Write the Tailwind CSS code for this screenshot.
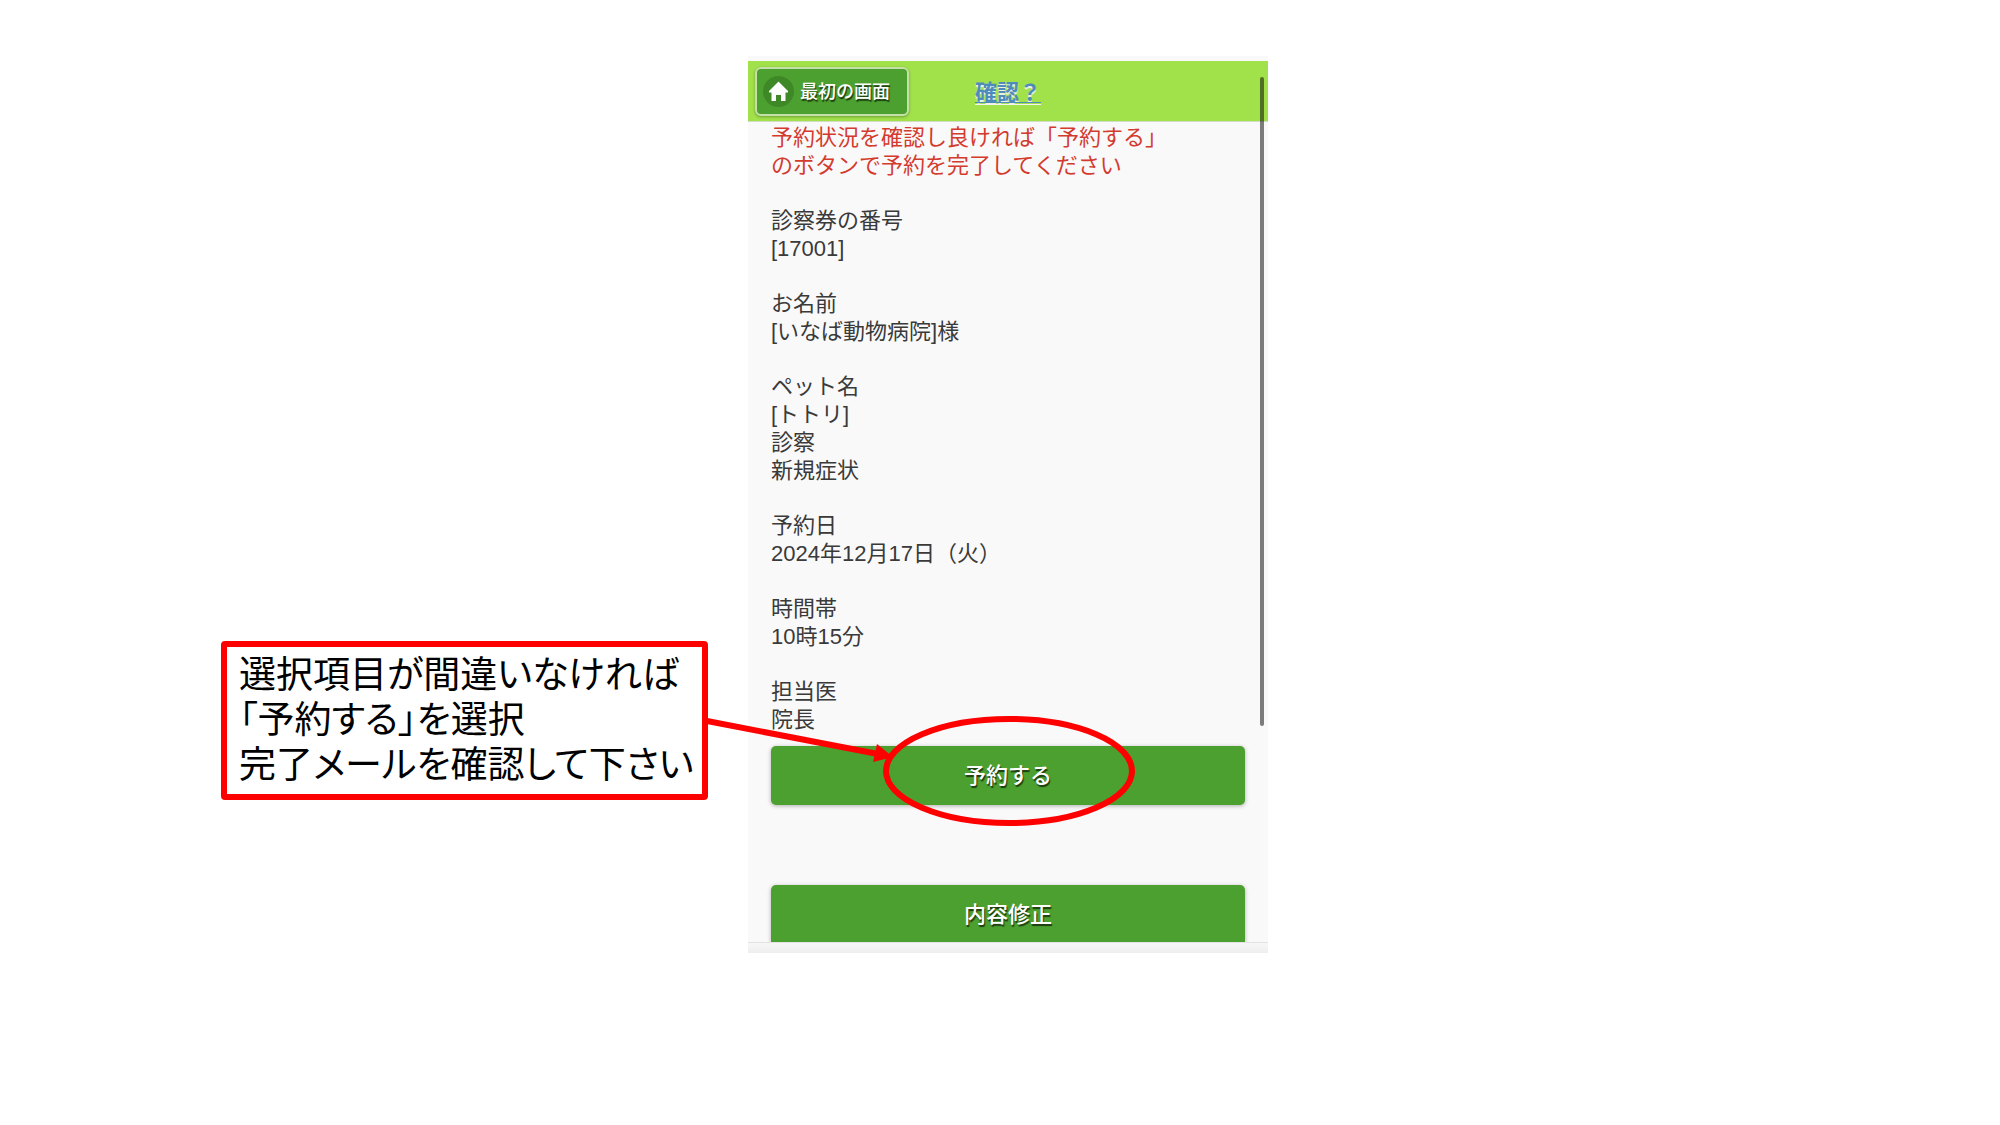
<!DOCTYPE html>
<html lang="ja">
<head>
    <meta charset="UTF-8">
    <meta name="viewport" content="width=device-width, initial-scale=1.0">
    <title>予約の確認</title>
    <script src="https://cdn.jsdelivr.net/npm/@tailwindcss/browser@4"></script>
</head>
<body class="bg-white min-h-screen font-['Liberation_Sans','Noto_Sans_CJK_JP',sans-serif]">
    <main class="grid grid-cols-[221fr_487fr_40fr_520fr_732fr] items-start pt-14">

        <!-- Callout -->
        <aside class="col-start-2 mt-[585px] rounded-sm border-6 border-[#ff0000] bg-white pt-[3px] pb-[9px] pl-3">
            <p class="text-[37px] leading-[45px] text-black whitespace-nowrap font-['Noto_Sans_CJK_JP',sans-serif] [font-feature-settings:'palt']">
                選択項目が間違いなければ<br>
                「予約する」を選択<br>
                完了メールを確認して下さい
            </p>
        </aside>

        <!-- Phone screen -->
        <section class="relative col-start-4 bg-[#f9f9f9] pt-[5px]">
            <header class="relative flex h-[61px] items-center border-b border-[#d3dcc5] bg-[#a1e14a] px-[7px]">
                <a href="#" class="flex h-[49px] items-center gap-[6px] rounded-md border-2 border-[#c3e0a8] bg-[#4ca02f] pl-[6px] pr-[17px] text-lg font-medium text-white whitespace-nowrap shadow-[0_1px_3px_rgba(0,0,0,0.3)] [text-shadow:1px_2px_1px_#1c3b10]">
                    <svg class="size-[31px]" viewBox="0 0 31 31" aria-hidden="true">
                        <circle cx="15.500" cy="15.500" r="15.500" fill="#3e8827"/>
                        <path d="M15.500 5.500L6 15v1.500h2.500V25h4.500v-6h5v6h4.500v-8.500H25V15z" fill="#fff"/>
                    </svg>
                    <span class="pt-[2px]">最初の画面</span>
                </a>
                <h1 class="absolute inset-x-0 pt-[3px] text-center pointer-events-none text-[22px] leading-7 font-bold text-[#4f8cbb] [text-shadow:0_2px_1px_#f3f3f3]">
                    <a href="#" class="underline decoration-1 underline-offset-2 pointer-events-auto">確認？</a>
                </h1>
            </header>

            <div class="space-y-[27px] px-[23px] pt-[2px] text-[22px] leading-7 text-[#3a3a3a]">
                <p class="text-[#d33b2f]">予約状況を確認し良ければ「予約する」<br>のボタンで予約を完了してください</p>
                <p>診察券の番号<br>[17001]</p>
                <p>お名前<br>[いなば動物病院]様</p>
                <p>ペット名<br>[トトリ]<br>診察<br>新規症状</p>
                <p>予約日<br>2024年12月17日（火）</p>
                <p>時間帯<br>10時15分</p>
                <p>担当医<br>院長</p>
            </div>

            <div class="flex flex-col gap-20 overflow-hidden px-[23px] pt-3">
                <button type="button" class="h-[59px] rounded-[5px] bg-[#4ca02f] text-[22px] font-medium text-white shadow-[0_1px_4px_rgba(0,0,0,0.3)] [text-shadow:1px_2px_1px_#1c3b10]">予約する</button>
                <button type="button" class="h-[57px] rounded-t-[5px] bg-[#4ca02f] pt-[2px] text-[22px] font-medium text-white shadow-[0_1px_4px_rgba(0,0,0,0.3)] [text-shadow:1px_2px_1px_#1c3b10]">内容修正</button>
            </div>
            <div class="h-[11px] border-t border-[#e2e2e2] bg-linear-to-b from-[#f7f7f7] to-[#eeeeee]"></div>

            <!-- Scrollbar -->
            <div class="absolute top-[21px] right-1 h-[649px] w-1 rounded-full bg-black/50"></div>

            <!-- Marker on the reserve button, with the arrow from the callout -->
            <svg class="pointer-events-none absolute top-0 left-0 w-full overflow-visible" viewBox="0 0 520 897" aria-hidden="true">
                <ellipse cx="261" cy="715" rx="123" ry="52" fill="none" stroke="#ff0000" stroke-width="6"/>
                <path d="M-41 665L130 698" stroke="#ff0000" stroke-width="6"/>
                <path d="M145 701L129 688L125 706z" fill="#ff0000"/>
            </svg>
        </section>
    </main>
</body>
</html>
